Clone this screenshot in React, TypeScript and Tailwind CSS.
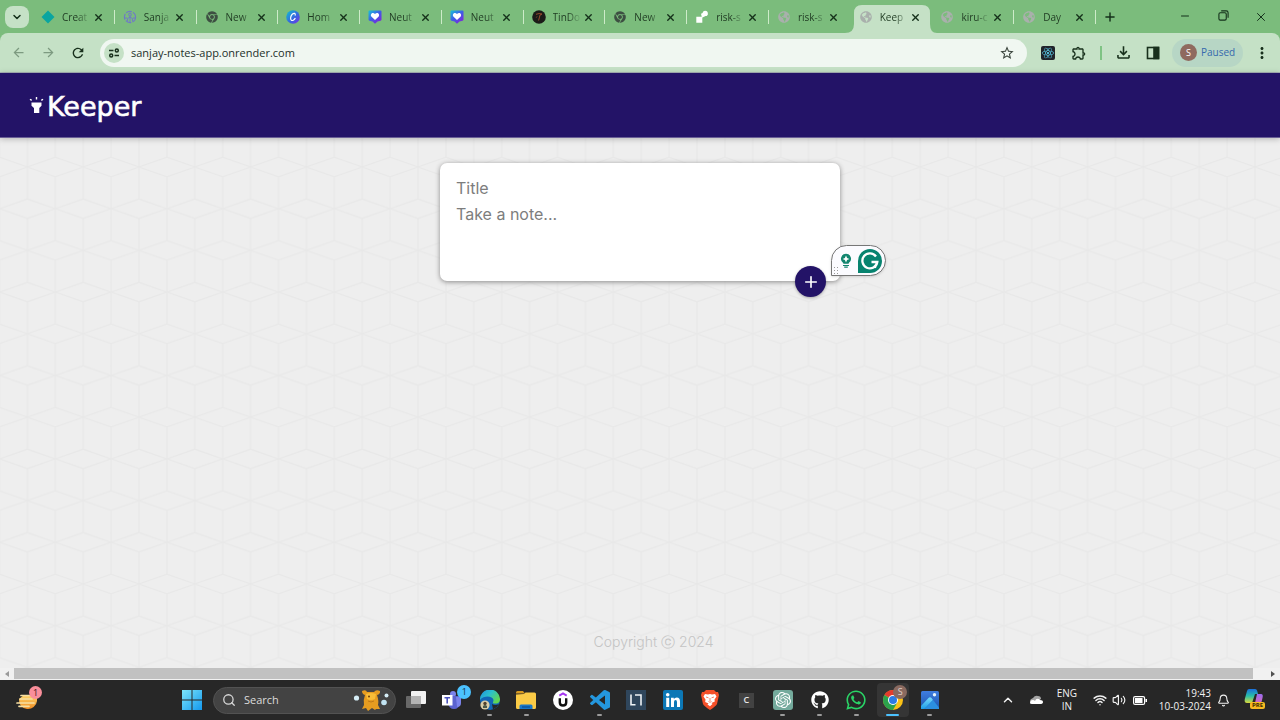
import type { ReactNode } from "react";
import {
  MdArrowBack,
  MdArrowForward,
  MdRefresh,
  MdStarOutline,
  MdOutlineExtension,
  MdOutlineFileDownload,
  MdMoreVert,
} from "react-icons/md";
import { FaChrome, FaGlobeAmericas, FaGithub, FaWhatsapp, FaReact } from "react-icons/fa";
import { SiOpenai } from "react-icons/si";
import { BiLogoVisualStudio } from "react-icons/bi";
import { ChevronDown, ChevronUp, Plus, X, Minus, Search, Bell, Volume2, Wifi } from "lucide-react";

/* ---------- Tab icons ---------- */

const Diamond = () => (
  <svg viewBox="0 0 14 14" className="size-3.5">
    <path d="M7 .5 13.5 7 7 13.5 .5 7Z" fill="#0aa5a0" />
  </svg>
);

const Ring = () => (
  <svg viewBox="0 0 14 14" className="size-3.5" fill="none" stroke="#6f78c8">
    <circle cx="7" cy="7" r="5.6" strokeDasharray="6 1.2" strokeWidth="1.1" />
    <circle cx="7" cy="4.6" r="1.4" />
    <path d="M7 6v6M4.5 11V8.5Q7 5.5 9.5 8.5V11M2 8h2M10 8h2" />
  </svg>
);

const Canva = () => (
  <svg viewBox="0 0 14 14" className="size-3.5">
    <defs>
      <linearGradient id="canva" x1="0" y1="0" x2="1" y2="1">
        <stop offset="0" stopColor="#10c4cf" />
        <stop offset=".55" stopColor="#3568e0" />
        <stop offset="1" stopColor="#7b2be8" />
      </linearGradient>
    </defs>
    <circle cx="7" cy="7" r="6.8" fill="url(#canva)" />
    <path d="M9.2 5.2c.5-2-1.3-2.4-2.7-1.2C4.7 5.6 4 9 5.2 10.1c1.1 1 3-.1 3.9-1.7" fill="none" stroke="#fff" strokeWidth="1.2" strokeLinecap="round" />
  </svg>
);

const Heart = () => (
  <svg viewBox="0 0 14 14" className="size-3.5">
    <defs>
      <linearGradient id="heart" x1="0" y1="0" x2=".8" y2="1">
        <stop offset="0" stopColor="#16c5d8" />
        <stop offset=".5" stopColor="#3e5de8" />
        <stop offset="1" stopColor="#8520d8" />
      </linearGradient>
    </defs>
    <path d="M1.5 .5h11q1 0 1 1v8q0 1-1 1.2L9.500 11.500 7 13.800 4.500 11.500 1.500 10.700q-1-.2-1-1.200v-8q0-1 1-1Z" fill="url(#heart)" />
    <path d="M7 10 3.300 6.400C1.800 4.500 4.400 1.600 7 4 9.600 1.600 12.200 4.500 10.700 6.400Z" fill="#fff" />
  </svg>
);

const TinDog = () => (
  <svg viewBox="0 0 14 14" className="size-3.5">
    <circle cx="7" cy="7" r="6.8" fill="#1b1b18" />
    <path d="M4 4.3Q7 3 10 4L8 5 6.6 10.5M5 6.5 4.3 7.5" fill="none" stroke="#a34f30" strokeWidth=".9" />
  </svg>
);

const Render = () => (
  <svg viewBox="0 0 14 14" className="size-3.5" fill="#fff">
    <path d="M1.3 6.8h6v6h-6zM6 3.800l5.500-2.200 1 3.500-5.500 2.700z" />
    <circle cx="10.2" cy="3.4" r="2.6" />
  </svg>
);

const NewTab = () => <FaChrome className="size-3 text-[#3d4f42]" />;
const Globe = () => <FaGlobeAmericas className="size-3 text-[#a9b0ac]" />;

const tabs: { title: string; icon: ReactNode; active?: boolean }[] = [
  { title: "Creat", icon: <Diamond /> },
  { title: "Sanja", icon: <Ring /> },
  { title: "New", icon: <NewTab /> },
  { title: "Hom", icon: <Canva /> },
  { title: "Neut", icon: <Heart /> },
  { title: "Neut", icon: <Heart /> },
  { title: "TinDo", icon: <TinDog /> },
  { title: "New", icon: <NewTab /> },
  { title: "risk-s", icon: <Render /> },
  { title: "risk-s", icon: <Globe /> },
  { title: "Keep", icon: <Globe />, active: true },
  { title: "kiru-c", icon: <Globe /> },
  { title: "Day", icon: <Globe /> },
];

function Tab({ title, icon, active, divider }: { title: string; icon: ReactNode; active?: boolean; divider: boolean }) {
  return (
    <div className="relative flex h-7 min-w-0 flex-1 items-center">
      {active && (
        <svg viewBox="0 0 92 28" preserveAspectRatio="none" className="absolute -left-1.5 top-0 h-7 w-[92px]" fill="#c5e1c6">
          <path d="M0 28Q9 28 9 19V8Q9 0 17 0H77Q85 0 85 8V19Q85 28 92 28Z" />
        </svg>
      )}
      <div className="relative flex w-full items-center pb-1 pl-2">
        <span className="flex w-3.5 shrink-0 justify-center">{icon}</span>
        <span className="ml-[7px] w-[30px] whitespace-nowrap text-[10px] leading-4 text-[#1f3a22] [mask-image:linear-gradient(to_right,black_50%,transparent_95%)]">
          {title}
        </span>
        <button aria-label={`Close ${title}`} className="flex size-3 items-center justify-center">
          <X className="size-[11px] text-[#14301a]" strokeWidth={3} />
        </button>
      </div>
      {divider && <span className="absolute right-0 top-[5px] h-3.5 w-px bg-[#cdebc9]" />}
    </div>
  );
}

function TabStrip() {
  return (
    <div className="flex h-[33px] items-center bg-[#7bbc7c]">
      <button aria-label="Search tabs" className="ml-[5px] flex h-[22px] w-6 shrink-0 items-center justify-center rounded-lg bg-[#c5e1c6]">
        <ChevronDown className="size-3 text-[#14301a]" strokeWidth={3} />
      </button>
      <div className="ml-1 flex min-w-0 flex-1 self-end">
        {tabs.map((tab, i) => (
          <Tab key={i} {...tab} divider={i !== 9 && i !== 10} />
        ))}
      </div>
      <div className="flex w-[184px] shrink-0 items-center text-[#14301a]">
        <button aria-label="New tab" className="flex w-7 justify-center">
          <Plus className="size-3.5" strokeWidth={2.5} />
        </button>
        <div className="ml-auto flex">
          <button aria-label="Minimise" className="flex w-[38px] justify-center">
            <Minus className="size-3" />
          </button>
          <button aria-label="Restore" className="flex w-[38px] justify-center">
            <svg viewBox="0 0 12 12" className="size-[11px]" fill="none" stroke="currentColor" strokeWidth="1.2">
              <rect x="1" y="3" width="8" height="8" rx="1.5" />
              <path d="M3.5 1H9Q11 1 11 3V8.500" />
            </svg>
          </button>
          <button aria-label="Close window" className="flex w-[38px] justify-center">
            <X className="size-3.5" strokeWidth={1.7} />
          </button>
        </div>
      </div>
    </div>
  );
}

function Toolbar() {
  return (
    <div className="bg-[#7bbc7c]">
      <div className="flex h-10 items-center rounded-t-lg border-b border-[#a9b4b8] bg-[#c5e1c6] text-[#18301c]">
        <button aria-label="Back" className="ml-2.5 flex w-4 justify-center text-[#7d9a80]">
          <MdArrowBack className="size-[15px]" />
        </button>
        <button aria-label="Forward" className="ml-3.5 flex w-4 justify-center text-[#7d9a80]">
          <MdArrowForward className="size-[15px]" />
        </button>
        <button aria-label="Reload" className="ml-3.5 flex w-4 justify-center">
          <MdRefresh className="size-4" />
        </button>
        <div className="ml-3.5 flex h-7 flex-1 items-center rounded-full bg-[#f0f7f1] pl-1 pr-3">
          <button aria-label="Site information" className="flex size-5 items-center justify-center rounded-full bg-[#c5e1c6]">
            <svg viewBox="0 0 12 12" className="size-3" fill="none" stroke="currentColor" strokeWidth="1.5">
              <path d="M1 3.500h4.500M6.500 8.500H11" />
              <circle cx="8.8" cy="3.5" r="1.5" />
              <circle cx="3.2" cy="8.5" r="1.5" />
            </svg>
          </button>
          <input
            aria-label="Address"
            defaultValue="sanjay-notes-app.onrender.com"
            className="ml-[7px] min-w-0 flex-1 bg-transparent text-[11px] leading-4 text-[#23302a] outline-none"
          />
          <button aria-label="Bookmark this page">
            <MdStarOutline className="size-4 text-[#3a443c]" />
          </button>
        </div>
        <button aria-label="React developer tools" className="ml-3.5 flex size-3.5 items-center justify-center rounded-[2px] bg-[#20232a]">
          <FaReact className="size-3 text-[#5ccfee]" />
        </button>
        <button aria-label="Extensions" className="ml-4">
          <MdOutlineExtension className="size-4" />
        </button>
        <span className="ml-[13px] h-3.5 w-0.5 bg-[#7fc384]" />
        <button aria-label="Downloads" className="ml-3">
          <MdOutlineFileDownload className="size-[19px]" />
        </button>
        <button aria-label="Side panel" className="ml-[13px]">
          <svg viewBox="0 0 14 14" className="size-3.5" fill="none" stroke="currentColor" strokeWidth="1.6">
            <rect x="1.5" y="1.5" width="11" height="11" />
            <path d="M8 1.500h4.500v11H8z" fill="currentColor" />
          </svg>
        </button>
        <button className="ml-3 flex h-7 w-[71px] items-center rounded-full bg-[#b7d6c5] pl-2 text-[#3569ad]">
          <span className="mr-1 flex size-[17px] items-center justify-center rounded-full bg-[#8f6a5f] text-[9px] text-white">S</span>
          <span className="text-[10px]">Paused</span>
        </button>
        <button aria-label="Menu" className="ml-2.5 mr-[9px]">
          <MdMoreVert className="size-[18px]" />
        </button>
      </div>
    </div>
  );
}

/* ---------- Page ---------- */

function CubePattern() {
  return (
    <svg className="absolute inset-0 -z-10 size-full" aria-hidden="true">
      <defs>
        <pattern id="cubes" width="55.8" height="83.4" x="27.4" y="52.3" patternUnits="userSpaceOnUse">
          <g fill="none" stroke="#e8e8e8" strokeWidth="1.3">
            <path d="M0 41.7 27.9 32 55.8 41.7 27.9 51.4Z" />
            <path d="M0 -9.7 27.9 0 55.8 -9.7M0 9.7 27.9 0 55.8 9.7M0 73.7 27.9 83.4 55.8 73.7" />
            <path d="M27.9 0V32M27.9 51.4V83.4M0 9.7V73.7M55.8 9.7V73.7" />
          </g>
        </pattern>
      </defs>
      <rect width="100%" height="100%" fill="url(#cubes)" />
    </svg>
  );
}

function Header() {
  return (
    <header className="relative z-10 flex h-[65px] items-center border-b border-[#6a5f96] bg-[#231367] pl-[29px] pt-1 shadow-[0_1px_6px_rgba(0,0,0,0.25)]">
      <svg viewBox="0 0 15 18" className="mb-1 mr-[3px] h-[18px] w-[15px]" fill="#fff">
        <path d="M2.5 6.500h10v3.300L10.300 12v5H5v-5L2.500 9.800Z" />
        <path d="M7.500 1v2.500M1 3.200 2.700 4.400M14 3.200 12.300 4.400" stroke="#fff" strokeWidth="1.4" />
      </svg>
      <h1 className="font-['DejaVu_Sans',sans-serif] text-[27px] leading-9 text-white [-webkit-text-stroke:0.6px_white]">Keeper</h1>
    </header>
  );
}

function Grammar() {
  return (
    <div className="absolute -right-[46px] top-[82px] flex h-[31px] w-[55px] items-center rounded-full rounded-bl-none border border-[#777] bg-[#fbfbff] pl-2 shadow-sm">
      <button aria-label="Writing ideas">
        <svg viewBox="0 0 12 16" className="h-4 w-3">
          <path d="M6 .8a5 5 0 0 0-3 9l.5 1h5l.5-1a5 5 0 0 0-3-9Z" fill="#12856f" />
          <path d="M6 2.600 7.100 4.900 9.400 6 7.100 7.100 6 9.400 4.900 7.100 2.600 6 4.900 4.900Z" fill="#fff" />
          <path d="M3 12.500h6M4.200 14.200h3.600" stroke="#12856f" strokeWidth="1.2" />
        </svg>
      </button>
      <button aria-label="Grammar check" className="ml-1.5">
        <svg viewBox="0 0 24 24" className="size-6">
          <path d="M0 24V12A12 12 0 1 1 12 24Z" fill="#07836f" />
          <path d="M18 7.500A7.500 7.500 0 1 0 19.300 13H13.500M19.300 13 16.800 18.800" fill="none" stroke="#fff" strokeWidth="2.3" />
        </svg>
      </button>
      <svg viewBox="0 0 5 7" className="absolute bottom-px left-0.5 h-[7px] w-[5px]" fill="#999">
        <path d="M0 0h1v1H0zM3 0h1v1H3zM0 3h1v1H0zM3 3h1v1H3zM0 6h1v1H0zM3 6h1v1H3z" />
      </svg>
    </div>
  );
}

function NoteForm() {
  return (
    <form className="relative mx-auto mt-[25px] flex w-[400px] flex-col rounded-[7px] bg-white px-4 pb-4 pt-3 shadow-[0_1px_5px_rgb(138,137,137)]" onSubmit={(e) => e.preventDefault()}>
      <input aria-label="Title" placeholder="Title" className="h-[26px] text-[16px] outline-none placeholder:text-[#7d7d7d]" />
      <textarea
        aria-label="Note"
        placeholder="Take a note..."
        rows={3}
        className="block h-16 resize-none text-[16px] leading-[26px] outline-none placeholder:text-[#7d7d7d]"
      />
      <button type="submit" aria-label="Add note" className="absolute -bottom-4 right-3.5 flex size-[31px] items-center justify-center rounded-full bg-[#231367] text-white shadow-[0_1px_3px_rgba(0,0,0,0.3)]">
        <Plus className="size-[18px]" strokeWidth={2.2} />
      </button>
      <Grammar />
    </form>
  );
}

function ScrollBar() {
  return (
    <div className="flex h-3 items-center bg-[#f1f1f1]">
      <span className="flex w-3.5 justify-center">
        <svg viewBox="0 0 4 6" className="h-1.5 w-1" fill="#9a9a9a"><path d="M4 0v6L0 3Z" /></svg>
      </span>
      <span className="h-[11px] flex-1 self-start bg-[#c1c1c1]" />
      <span className="flex w-[27px] justify-end pr-[5px]">
        <svg viewBox="0 0 4 6" className="h-1.5 w-1" fill="#505050"><path d="M0 0v6L4 3Z" /></svg>
      </span>
    </div>
  );
}

/* ---------- Taskbar ---------- */

const Weather = () => (
  <svg viewBox="0 0 26 26" className="size-[26px]">
    <defs>
      <linearGradient id="sun" x1="0" y1="0" x2="0" y2="1">
        <stop offset="0" stopColor="#ffd66b" />
        <stop offset="1" stopColor="#ee8b22" />
      </linearGradient>
    </defs>
    <path d="M3 12a9 9 0 0 0 18 2V8H8Z" fill="url(#sun)" />
    <path d="M5 8.500h8M4 12h12M1 16h17M3 19.300h10" stroke="#f6dfa4" strokeWidth="1.7" strokeLinecap="round" />
  </svg>
);

const Windows = () => (
  <svg viewBox="0 0 20 20" className="size-5">
    <defs>
      <linearGradient id="win" x1="0" y1="0" x2="1" y2="1">
        <stop offset="0" stopColor="#7de6fb" />
        <stop offset="1" stopColor="#1398ee" />
      </linearGradient>
    </defs>
    <path d="M0 0h9.500v9.500H0zM10.500 0H20v9.500h-9.500zM0 10.500h9.500V20H0zM10.500 10.500H20V20h-9.500z" fill="url(#win)" />
  </svg>
);

const Creature = () => (
  <svg viewBox="0 0 36 22" className="h-[22px] w-9">
    <circle cx="3.5" cy="9" r="2.6" fill="#d5edf6" />
    <circle cx="33.5" cy="6.5" r="2" fill="#d5edf6" />
    <circle cx="31" cy="13.5" r="2.8" fill="#c1e3f2" />
    <path d="M9 2q4-2 5 1h7q2-3 6-1 .5 3-3 4 2 6 1 10l2 4h-4l-1 1-3-2-4 3-2-3-4 1 2-4q-1-5 1-10-3-1-3-4Z" fill="#e59c20" />
    <path d="M13 5q5-2 10 0l-1 5q-4 2-8 0Z" fill="#f8bd37" />
    <circle cx="16" cy="7.5" r="1" fill="#6b3d0d" />
    <path d="M15 12q3 2 6 0" stroke="#b36f14" strokeWidth=".8" fill="none" />
  </svg>
);

const TaskView = () => (
  <svg viewBox="0 0 20 20" className="size-5">
    <rect x="0" y="6" width="15" height="12" rx="1" fill="#686868" />
    <rect x="5" y="1" width="15" height="13" rx="1" fill="#f2f2f2" />
    <path d="M5 6h10v8H5z" fill="#b4b4b4" />
  </svg>
);

const Teams = () => (
  <svg viewBox="0 0 24 26" className="h-[26px] w-6">
    <circle cx="12" cy="7" r="3" fill="#7b83eb" />
    <path d="M8 9h11v7q-1 6-6 6t-6-6Z" fill="#5b63cf" />
    <path d="M15 10h5v6q0 4-4 4Z" fill="#7b83eb" />
    <rect x="1" y="8" width="10.5" height="10.5" fill="#fff" />
    <path d="M3.5 10.800h5.500M6.200 10.800V16.500" stroke="#4b53bc" strokeWidth="1.6" />
  </svg>
);

const Edge = () => (
  <svg viewBox="0 0 20 20" className="size-5">
    <defs>
      <linearGradient id="edge" x1="0" y1="0" x2="1" y2=".6">
        <stop offset="0" stopColor="#1f8fe0" />
        <stop offset=".5" stopColor="#2bc0cc" />
        <stop offset="1" stopColor="#62d650" />
      </linearGradient>
    </defs>
    <circle cx="10" cy="10" r="10" fill="#1266b8" />
    <path d="M0 10A10 10 0 0 1 20 9c.2 4-3 5-6 4.500-2-.5-.5-1.500-.5-3.500C13 6 4 5 0 10Z" fill="url(#edge)" />
    <path d="M12 14q3 2 7 0-2 4-6 5.500Z" fill="#262626" />
    <circle cx="5" cy="15" r="4.6" fill="#d8cda8" />
    <path d="M3 18v-2q2-2 4 0v2" fill="#4c5a4a" />
    <circle cx="5" cy="13.5" r="1.7" fill="#50412d" />
  </svg>
);

const Folder = () => (
  <svg viewBox="0 0 20 20" className="size-5">
    <path d="M0 2.500Q0 1 1.500 1H7l2 2.500H0Z" fill="#d79a21" />
    <path d="M0 4.500 8 4l1.500-1.500h9Q20 2.500 20 4v13.500q0 1.500-1.500 1.500h-17Q0 19 0 17.500Z" fill="#fbcb46" />
    <path d="M3.5 19v-3q0-1.500 1.500-1.500h10q1.500 0 1.500 1.500v3Z" fill="#1977c8" />
    <path d="M6 17h8" stroke="#0c4f96" strokeWidth="1.3" />
  </svg>
);

const Udemy = () => (
  <svg viewBox="0 0 20 20" className="size-5" fill="none">
    <circle cx="10" cy="10" r="10" fill="#fff" />
    <path d="M6.3 5.600 10 3.500l3.700 2.100" stroke="#a435f0" strokeWidth="2" />
    <path d="M6.8 8.200v4.300q0 3 3.200 3t3.200-3V8.200" stroke="#111" strokeWidth="2.4" />
  </svg>
);

const Bracket = () => (
  <svg viewBox="0 0 20 20" className="size-5" fill="none">
    <path d="M0 0h20v20H0z" fill="#2f465c" />
    <path d="M5 4.500v10.300h4.500M9 5h6v10.500" stroke="#eef2f5" strokeWidth="1.6" />
  </svg>
);

const LinkedIn = () => (
  <svg viewBox="0 0 20 20" className="size-5">
    <rect width="20" height="20" rx="2" fill="#0c78b6" />
    <circle cx="4.7" cy="4.7" r="1.8" fill="#fff" />
    <path d="M3.2 7.700h3V17h-3zM8 7.700h2.800V9q1-1.600 3-1.600 3.200 0 3.200 4V17h-3v-5q0-2-1.500-2T11 12v5H8Z" fill="#fff" />
  </svg>
);

const Brave = () => (
  <svg viewBox="0 0 18 20" className="h-5 w-[18px]">
    <path d="M5 0h8l2 2 2 0 1 3-2 9q-1 2-7 6-6-4-7-6L0 5l1-3h2Z" fill="#f4502a" />
    <path d="M4 4l3 .5L9 4l2 .5 3-.5 1.500 2.500-2 3 .3 2-3.300 1.500 1 1L9 16.200 6.500 14.500l1-1L4.200 12l.3-2.500-2-3Z" fill="#fff" />
    <path d="M5 7l2.500.8M13 7l-2.500.8M9 8v3M7.500 11.500 9 12.300l1.500-.8" stroke="#f4502a" strokeWidth=".7" fill="none" />
  </svg>
);

const Chrome = () => (
  <svg viewBox="0 0 20 20" className="size-5">
    <circle cx="10" cy="10" r="10" fill="#fbc116" />
    <path d="M10 10 1.340 5A10 10 0 0 1 18.660 5Z" fill="#e33b2e" />
    <path d="M10 10 1.340 5A10 10 0 0 0 10 20l4.300-7.500Z" fill="#2ca24c" />
    <circle cx="10" cy="10" r="5" fill="#fff" />
    <circle cx="10" cy="10" r="4" fill="#2c7be5" />
  </svg>
);

const Photos = () => (
  <svg viewBox="0 0 18 18" className="size-[18px]">
    <defs>
      <linearGradient id="sky" x1="0" y1="0" x2="0" y2="1">
        <stop offset="0" stopColor="#3f7de0" />
        <stop offset="1" stopColor="#1c56ae" />
      </linearGradient>
      <linearGradient id="hill" x1="0" y1="0" x2="0" y2="1">
        <stop offset="0" stopColor="#79dbfa" />
        <stop offset="1" stopColor="#1c9be8" />
      </linearGradient>
    </defs>
    <rect width="18" height="18" rx="1.5" fill="url(#sky)" />
    <path d="M0 15 7.500 7Q9 5.500 10.500 7L12 9 3.500 18H0Z" fill="url(#hill)" />
    <path d="M12 9l6 7.500V18H3.500Z" fill="#2b8fe0" />
    <circle cx="13.5" cy="3.8" r="1.7" fill="#e8f5fc" />
  </svg>
);

const Copilot = () => (
  <svg viewBox="0 0 20 18" className="h-[18px] w-5">
    <defs>
      <linearGradient id="cpl" x1="0" y1="0" x2="0" y2="1">
        <stop offset="0" stopColor="#1b6fdc" />
        <stop offset=".5" stopColor="#29bfa8" />
        <stop offset="1" stopColor="#dcd93a" />
      </linearGradient>
      <linearGradient id="cpr" x1="0" y1="0" x2="0" y2="1">
        <stop offset="0" stopColor="#9a6cf2" />
        <stop offset="1" stopColor="#f0679e" />
      </linearGradient>
    </defs>
    <path d="M5 0h6q2 0 2.500 3l.5 2h-3L8 14H3Q0 14 .8 10L3 2Q3.500 0 5 0Z" fill="url(#cpl)" />
    <path d="M13 5h4q2.500 0 1.500 4L17 15q-1 3-3 3H8q2 0 3-4Z" fill="url(#cpr)" />
  </svg>
);

const apps: { name: string; icon: ReactNode; state?: "open" | "current"; badge?: ReactNode }[] = [
  { name: "Task view", icon: <TaskView /> },
  {
    name: "Teams",
    icon: <Teams />,
    badge: <span className="absolute right-0 top-[5px] flex size-3.5 items-center justify-center rounded-full bg-[#4cc2ff] text-[9px] text-[#12304a]">1</span>,
  },
  { name: "Edge", icon: <Edge />, state: "open" },
  { name: "File Explorer", icon: <Folder />, state: "open" },
  { name: "Udemy", icon: <Udemy /> },
  { name: "Visual Studio Code", icon: <BiLogoVisualStudio className="size-6 text-[#2497de]" />, state: "open" },
  { name: "Learning", icon: <Bracket /> },
  { name: "LinkedIn", icon: <LinkedIn /> },
  { name: "Brave", icon: <Brave /> },
  { name: "C", icon: <span className="flex size-[15px] items-center justify-center bg-[#424242] text-[9px] font-semibold text-[#e8e8e8]">C</span> },
  {
    name: "ChatGPT",
    icon: <span className="flex size-5 items-center justify-center rounded-[3px] bg-[#74aa9c]"><SiOpenai className="size-4 text-white" /></span>,
    state: "open",
  },
  { name: "GitHub", icon: <FaGithub className="size-[18px] text-white" />, state: "open" },
  { name: "WhatsApp", icon: <FaWhatsapp className="size-[22px] text-[#2ad366]" />, state: "open" },
  {
    name: "Chrome",
    icon: <Chrome />,
    state: "current",
    badge: <span className="absolute right-1 top-[5px] flex size-3.5 items-center justify-center rounded-full bg-[#8a6a60] text-[9px] text-[#e0d2cc]">S</span>,
  },
  { name: "Photos", icon: <Photos />, state: "open" },
];

function Taskbar() {
  return (
    <footer className="flex h-10 items-center bg-[#272727] text-[#f2f2f2]">
      <div className="w-[174px] pl-4">
        <button aria-label="Weather" className="relative flex">
          <Weather />
          <span className="absolute -top-px right-0 flex size-[13px] items-center justify-center rounded-full bg-[#fa8f9b] text-[9px] text-[#3c1216]">1</span>
        </button>
      </div>
      <button aria-label="Start" className="flex w-9 justify-center">
        <Windows />
      </button>
      <label className="ml-[3px] flex h-[27px] w-[183px] items-center rounded-full border border-[#525252] bg-[#434343] pl-2 pr-1.5">
        <Search className="size-3.5 text-[#d8d8d8]" strokeWidth={2.2} />
        <input aria-label="Search" placeholder="Search" className="ml-2 min-w-0 flex-1 bg-transparent text-[11px] outline-none placeholder:text-[#dcdcdc]" />
        <Creature />
      </label>
      <div className="ml-0.5 grid w-[550px] grid-cols-15">
        {apps.map((app) => (
          <button
            key={app.name}
            aria-label={app.name}
            className={`relative flex h-10 items-center justify-center ${app.state === "current" ? "before:absolute before:inset-x-0.5 before:inset-y-[3px] before:rounded before:bg-[#353535]" : ""}`}
          >
            <span className="relative">{app.icon}</span>
            {app.badge}
            {app.state === "open" && <span className="absolute bottom-1 h-0.5 w-[5px] rounded-full bg-[#9b9b9b]" />}
            {app.state === "current" && <span className="absolute bottom-1 h-0.5 w-[13px] rounded-full bg-[#4cc2ff]" />}
          </button>
        ))}
      </div>
      <div className="ml-auto flex items-center pr-4">
        <button aria-label="Hidden icons">
          <ChevronUp className="size-3.5" strokeWidth={2.5} />
        </button>
        <svg viewBox="0 0 14 10" className="ml-3.5 h-2.5 w-3.5">
          <path d="M1 6Q1 4 4 3q2-3 5-2 3 0 3 3l-8 5Z" fill="#a6a6a6" />
          <path d="M1 8q0-3 3-3 1 0 2 1 1-3 4-2l1 1q3 0 3 2 0 2-3 2H3Q1 9 1 8Z" fill="#fff" />
        </svg>
        <span className="ml-3 w-6 text-center text-[10px] leading-[13px]">ENG IN</span>
        <span className="ml-3.5 flex items-center gap-[5px]">
          <Wifi className="size-3.5" strokeWidth={2.5} />
          <Volume2 className="size-3.5" strokeWidth={2} />
          <svg viewBox="0 0 14 9" className="ml-0.5 h-[9px] w-3.5">
            <rect x=".6" y=".6" width="11" height="7.8" rx="1.5" fill="none" stroke="#fff" strokeWidth="1.2" />
            <path d="M2 2h7.500v5H2zM12.500 3H14v3h-1.500z" fill="#fff" />
          </svg>
        </span>
        <span className="ml-3 text-right text-[10px] leading-[13px]">
          <span className="block">19:43</span>
          <span className="block">10-03-2024</span>
        </span>
        <button aria-label="Notifications" className="ml-1.5">
          <Bell className="size-[13px]" />
        </button>
        <button aria-label="Copilot" className="relative mb-1 ml-3.5">
          <Copilot />
          <span className="absolute -bottom-0.5 -right-px rounded-[2px] bg-[#f7b921] px-0.5 text-[6px] font-bold leading-[7px] text-[#3a2a00]">PRE</span>
        </button>
      </div>
    </footer>
  );
}

export default function App() {
  return (
    <div className="flex min-h-screen flex-col font-['Open_Sans','Noto_Sans',sans-serif]">
      <TabStrip />
      <Toolbar />
      <div className="relative isolate flex flex-1 flex-col bg-[#eeeeee] font-['Inter',sans-serif]">
        <CubePattern />
        <Header />
        <NoteForm />
        <p className="mt-auto pb-4 pl-[27px] text-center text-[14px] font-light leading-5 text-[#c4c4c4]">Copyright ⓒ 2024</p>
      </div>
      <ScrollBar />
      <Taskbar />
    </div>
  );
}
